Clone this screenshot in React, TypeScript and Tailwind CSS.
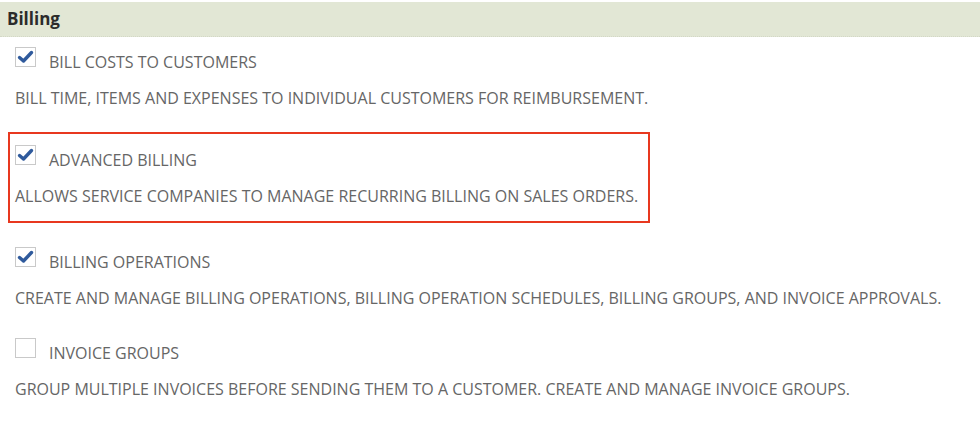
import React from "react";

function Check({ checked }: { checked: boolean }) {
  return (
    <div className="w-[21px] h-[20px] shrink-0 border border-[#c9c9c9] bg-white flex items-center justify-center">
      {checked && (
        <svg width="17" height="14" viewBox="0 0 17 14">
          <path
            d="M2.5 7.5 L6.5 11 L14.5 2.5"
            fill="none"
            stroke="#2f5a9c"
            strokeWidth="3.4"
            strokeLinecap="round"
            strokeLinejoin="round"
          />
        </svg>
      )}
    </div>
  );
}

function Item({ checked, label, desc }: { checked: boolean; label: string; desc: string }) {
  return (
    <div>
      <div className="flex items-start">
        <Check checked={checked} />
        <div className="ml-[13px] mt-[5px] leading-[20px] text-[16px] text-[#666666]">{label}</div>
      </div>
      <div className="mt-[16px] leading-[20px] text-[16px] text-[#666666] whitespace-nowrap">{desc}</div>
    </div>
  );
}

export default function App() {
  return (
    <div
      className="w-[980px] h-[435px] bg-white overflow-hidden"
      style={{ fontFamily: '"Open Sans", "Liberation Sans", sans-serif' }}
    >
      <div className="mt-[2px] h-[35px] bg-[#e2e7d5] border-b border-dotted border-[#d3d8c6] flex items-center px-[7px]">
        <span className="font-bold text-[17px] text-[#2b2b2b]">Billing</span>
      </div>
      <div className="pl-[15px] pt-[10px]">
        <Item
          checked
          label="BILL COSTS TO CUSTOMERS"
          desc="BILL TIME, ITEMS AND EXPENSES TO INDIVIDUAL CUSTOMERS FOR REIMBURSEMENT."
        />
      </div>
      <div className="ml-[8px] mt-[24px] w-[642px] border-2 border-[#e8381f] pl-[5px] pt-[11px] pb-[15px]">
        <Item
          checked
          label="ADVANCED BILLING"
          desc="ALLOWS SERVICE COMPANIES TO MANAGE RECURRING BILLING ON SALES ORDERS."
        />
      </div>
      <div className="pl-[15px] mt-[24px]">
        <Item
          checked
          label="BILLING OPERATIONS"
          desc="CREATE AND MANAGE BILLING OPERATIONS, BILLING OPERATION SCHEDULES, BILLING GROUPS, AND INVOICE APPROVALS."
        />
      </div>
      <div className="pl-[15px] mt-[30px]">
        <Item
          checked={false}
          label="INVOICE GROUPS"
          desc="GROUP MULTIPLE INVOICES BEFORE SENDING THEM TO A CUSTOMER. CREATE AND MANAGE INVOICE GROUPS."
        />
      </div>
    </div>
  );
}
